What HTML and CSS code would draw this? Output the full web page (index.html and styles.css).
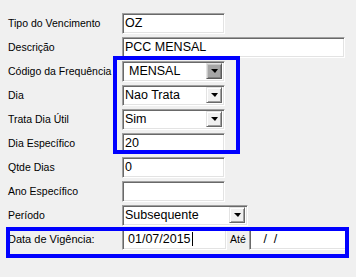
FILE: index.html
```html
<!DOCTYPE html>
<html lang="pt-BR">
<head>
  <meta charset="UTF-8">
  <title>Tipo do Vencimento</title>
  <link rel="stylesheet" href="styles.css">
</head>
<body>

<div class="form">
  <div class="row">
    <span class="label">Tipo do Vencimento</span>
    <div class="field short">OZ</div>
  </div>
  <div class="row">
    <span class="label">Descrição</span>
    <div class="field long">PCC MENSAL</div>
  </div>
  <div class="row">
    <span class="label">Código da Frequência</span>
    <div class="field combo short focus">
      <span class="value">MENSAL</span>
      <span class="drop pressed"><i></i></span>
    </div>
  </div>
  <div class="row">
    <span class="label">Dia</span>
    <div class="field combo short">
      <span class="value">Nao Trata</span>
      <span class="drop"><i></i></span>
    </div>
  </div>
  <div class="row">
    <span class="label">Trata Dia Útil</span>
    <div class="field combo short">
      <span class="value">Sim</span>
      <span class="drop"><i></i></span>
    </div>
  </div>
  <div class="row">
    <span class="label">Dia Específico</span>
    <div class="field short">20</div>
  </div>
  <div class="row">
    <span class="label">Qtde Dias</span>
    <div class="field short">0</div>
  </div>
  <div class="row">
    <span class="label">Ano Específico</span>
    <div class="field short"></div>
  </div>
  <div class="row">
    <span class="label">Período</span>
    <div class="field combo medium">
      <span class="value">Subsequente</span>
      <span class="drop"><i></i></span>
    </div>
  </div>
  <div class="row">
    <span class="label big">Data de Vigência:</span>
    <div class="field date">01/07/2015<span class="caret"></span></div>
    <span class="ate">Até</span>
    <div class="field date-to">&nbsp;&nbsp;&nbsp;/&nbsp;&nbsp;/</div>
  </div>

  <!-- highlight marks drawn over the form -->
  <div class="mark mark-freq"></div>
  <div class="mark mark-date"></div>
</div>

</body>
</html>
```

FILE: styles.css
```css
/* General Styles */
body {
  margin: 0;
  background-color: #f0f0f0;
  font-family: "Liberation Sans", Arial, sans-serif;
  color: #000;
}
.form {
  position: relative;
  height: 277px;
  padding: 11px 0 0 8px;
  box-sizing: border-box;
}
.row {
  display: flex;
  align-items: center;
  height: 24px;
}
.label {
  width: 114px;
  flex-shrink: 0;
  font-size: 10.5px;
}
.label.big {
  font-size: 11px;
}

/* Sunken edit boxes */
.field {
  box-sizing: border-box;
  height: 21px;
  display: flex;
  align-items: center;
  padding: 0 2px;
  background-color: #fff;
  font-size: 12.5px;
  white-space: nowrap;
  overflow: hidden;
  border: 1px solid;
  border-color: #a0a0a0 #fff #fff #a0a0a0;
  box-shadow: inset 1px 1px 0 #696969, inset -1px -1px 0 #e3e3e3;
}
.short { width: 103px; }
.medium { width: 126px; }
.long { width: 223px; }
.date { width: 105px; padding-left: 5px; }
.date-to { width: 97px; padding-left: 3px; border-right: none; }
.caret {
  display: inline-block;
  width: 1px;
  height: 14px;
  margin-left: 1px;
  background-color: #000;
}
.ate {
  width: 19px;
  padding-left: 3px;
  font-size: 10.5px;
  color: #000;
}

/* Combo boxes */
.combo {
  padding: 0 2px 0 2px;
}
.combo .value {
  flex: 1;
}
.combo.focus .value {
  padding-left: 4px;
}
.drop {
  box-sizing: border-box;
  width: 16px;
  height: 16px;
  display: flex;
  align-items: center;
  justify-content: center;
  background-color: #f0f0f0;
  border: 1px solid;
  border-color: #e3e3e3 #696969 #696969 #e3e3e3;
  box-shadow: inset 1px 1px 0 #fff, inset -1px -1px 0 #a0a0a0;
}
.drop.pressed {
  background-color: #a6a6a6;
  border-color: #e3e3e3 #5a5a5a #5a5a5a #e3e3e3;
  box-shadow: inset 1px 1px 0 #c8c8c8, inset -1px -1px 0 #808080;
}
.drop i {
  width: 0;
  height: 0;
  border-left: 4px solid transparent;
  border-right: 3px solid transparent;
  border-top: 4px solid #000;
}

/* Blue highlight marks */
.mark {
  position: absolute;
  border: 4px solid #0000ff;
  box-sizing: border-box;
}
.mark-freq {
  left: 113px;
  top: 56px;
  width: 127px;
  height: 98px;
}
.mark-date {
  left: 6px;
  top: 227px;
  width: 343px;
  height: 31px;
}
```
